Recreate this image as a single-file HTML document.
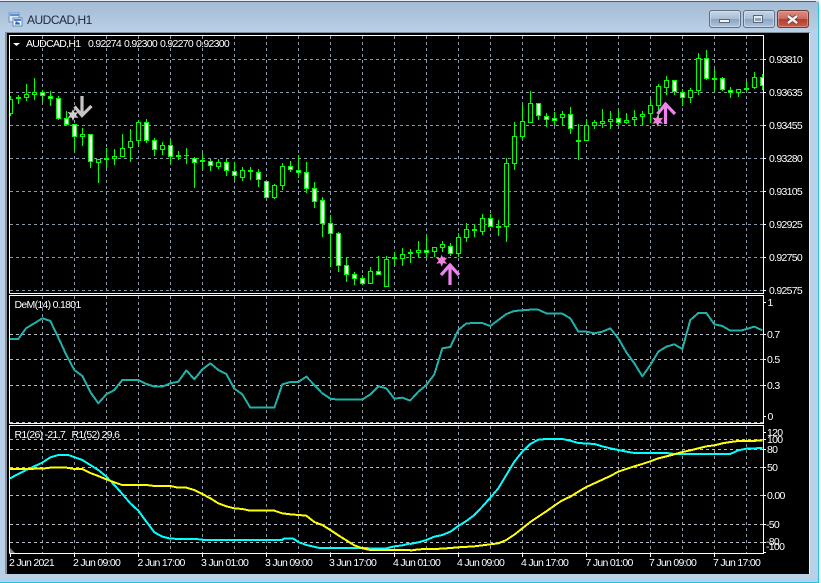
<!DOCTYPE html>
<html><head><meta charset="utf-8"><title>AUDCAD,H1</title>
<style>
html,body{margin:0;padding:0;background:#fff;width:821px;height:583px;overflow:hidden}
svg{position:absolute;left:0;top:0;display:block}
text{font-family:"Liberation Sans",sans-serif;font-size:10.5px;fill:#fff;letter-spacing:-.7px}
.c{shape-rendering:crispEdges}
</style></head><body>
<svg width="821" height="583" viewBox="0 0 821 583" xmlns="http://www.w3.org/2000/svg">
<defs>
<linearGradient id="tb" x1="0" y1="0" x2="0" y2="1"><stop offset="0" stop-color="#a3bbd4"/><stop offset="1" stop-color="#b9d0e6"/></linearGradient>
<linearGradient id="bt" x1="0" y1="0" x2="0" y2="1"><stop offset="0" stop-color="#c6d6e6"/><stop offset=".48" stop-color="#a9bfd6"/><stop offset=".52" stop-color="#8aa5c2"/><stop offset="1" stop-color="#b0c8e0"/></linearGradient>
<linearGradient id="rd" x1="0" y1="0" x2="0" y2="1"><stop offset="0" stop-color="#dc8f86"/><stop offset=".48" stop-color="#ce6b60"/><stop offset=".52" stop-color="#b23c2e"/><stop offset="1" stop-color="#c8604c"/></linearGradient>
<clipPath id="m"><rect x="10" y="36" width="753" height="257"/></clipPath>
<clipPath id="p2"><rect x="10" y="296" width="753" height="127"/></clipPath>
<clipPath id="p3"><rect x="10" y="426" width="753" height="127"/></clipPath>
</defs>
<!-- window chrome -->
<rect class="c" x="0" y="0" width="819" height="583" fill="#b9d1e8"/>
<rect class="c" x="0" y="2" width="819" height="30" fill="url(#tb)"/>
<rect class="c" x="0" y="0" width="821" height="1" fill="#e8eef4"/>
<rect class="c" x="0" y="1" width="816" height="1" fill="#555b62"/>
<rect class="c" x="818" y="3" width="1" height="580" fill="#22c8e0"/>
<rect class="c" x="819" y="0" width="2" height="583" fill="#fff"/>
<rect class="c" x="0" y="582" width="819" height="1" fill="#22c8e0"/>
<rect class="c" x="5" y="32" width="2" height="542" fill="#8b9096"/>
<rect class="c" x="5" y="32" width="805" height="1" fill="#7f8b98"/>
<rect class="c" x="7" y="33" width="802" height="541" fill="#000"/>
<rect class="c" x="809" y="33" width="1" height="541" fill="#e6edf4"/>
<!-- title icon -->
<g class="c">
<rect x="9" y="13" width="10" height="9" fill="#dbe9f6" stroke="#6f93bc"/>
<rect x="10" y="14" width="9" height="2" fill="#5f8fd0"/>
<rect x="13" y="18" width="9" height="8" fill="#f4f9fd" stroke="#5f8ac0"/>
<rect x="14" y="19" width="7" height="2" fill="#4f86d0"/>
<path d="M15 24h1v-2h1v2h1v-1h1v1h1" fill="none" stroke="#2f5f9f" stroke-width=".8"/>
</g>
<text x="27" y="24" style="font-size:12px;fill:#1c2a3a;letter-spacing:-.5px">AUDCAD,H1</text>
<!-- buttons -->
<rect x="709.5" y="10.5" width="31" height="17" rx="2.5" fill="url(#bt)" stroke="#5f6f84"/>
<rect x="710.5" y="11.5" width="29" height="15" rx="2" fill="none" stroke="#dbe6f1" stroke-opacity=".6"/>
<rect class="c" x="719.5" y="19.5" width="10" height="3" fill="#f2f4f6" stroke="#5a6675"/>
<rect x="743.5" y="10.5" width="31" height="17" rx="2.5" fill="url(#bt)" stroke="#5f6f84"/>
<rect x="744.5" y="11.5" width="29" height="15" rx="2" fill="none" stroke="#dbe6f1" stroke-opacity=".6"/>
<rect class="c" x="753.5" y="15.5" width="9" height="7" fill="#e8ecf0" stroke="#5a6675"/>
<rect class="c" x="755" y="18" width="6" height="3" fill="#8ea4bc"/>
<rect x="777.5" y="10.5" width="31" height="17" rx="2.5" fill="url(#rd)" stroke="#6e3a36"/>
<rect x="778.5" y="11.5" width="29" height="15" rx="2" fill="none" stroke="#eeb8b0" stroke-opacity=".5"/>
<path d="M788 16l9 7M797 16l-9 7" stroke="#5a3a3a" stroke-width="4" fill="none"/>
<path d="M788 16l9 7M797 16l-9 7" stroke="#f4f0ee" stroke-width="2.4" fill="none"/>
<!-- vertical grid -->
<g class="c" fill="none" stroke="#8a99a8" stroke-dasharray="3 3">
<path id="vg" d="M42.5 36V293M74.5 36V293M106.5 36V293M138.5 36V293M170.5 36V293M202.5 36V293M234.5 36V293M266.5 36V293M298.5 36V293M330.5 36V293M362.5 36V293M394.5 36V293M426.5 36V293M458.5 36V293M490.5 36V293M522.5 36V293M554.5 36V293M586.5 36V293M618.5 36V293M650.5 36V293M682.5 36V293M714.5 36V293M746.5 36V293"/>
<path d="M42.5 296V423M74.5 296V423M106.5 296V423M138.5 296V423M170.5 296V423M202.5 296V423M234.5 296V423M266.5 296V423M298.5 296V423M330.5 296V423M362.5 296V423M394.5 296V423M426.5 296V423M458.5 296V423M490.5 296V423M522.5 296V423M554.5 296V423M586.5 296V423M618.5 296V423M650.5 296V423M682.5 296V423M714.5 296V423M746.5 296V423"/>
<path d="M42.5 426V553M74.5 426V553M106.5 426V553M138.5 426V553M170.5 426V553M202.5 426V553M234.5 426V553M266.5 426V553M298.5 426V553M330.5 426V553M362.5 426V553M394.5 426V553M426.5 426V553M458.5 426V553M490.5 426V553M522.5 426V553M554.5 426V553M586.5 426V553M618.5 426V553M650.5 426V553M682.5 426V553M714.5 426V553M746.5 426V553"/>
<path d="M10 59.5H763M10 92.5H763M10 125.5H763M10 158.5H763M10 191.5H763M10 224.5H763M10 257.5H763M10 290.5H763"/>
</g>
<g class="c" fill="none" stroke="#b4bbc4" stroke-dasharray="3 3">
<path d="M10 334.5H763M10 359.5H763M10 385.5H763M10 422.5H763M10 439.5H763M10 449.5H763M10 467.5H763M10 495.5H763M10 524.5H763M10 542.5H763"/>
</g>
<!-- candles -->
<g class="c" clip-path="url(#m)">
<path fill="none" stroke="#0f0" d="M10.5 96V116M18.5 95V104M26.5 84V101M34.5 78V100M42.5 90V102M50.5 91V106M58.5 96V120M66.5 111V125M74.5 124V152M82.5 128V146M90.5 134V168M98.5 159V183M106.5 148V168M114.5 149V165M122.5 134V157M130.5 129V162M138.5 120V145M146.5 119V143M154.5 138V156M162.5 142V155M170.5 139V163M178.5 151V160M186.5 148V164M194.5 157V188M202.5 153V169M210.5 159V171M218.5 159V169M226.5 159V176M234.5 162V180M242.5 167V181M250.5 167V180M258.5 169V187M266.5 181V198M274.5 184V199M282.5 163V190M290.5 161V172M298.5 155V178M306.5 162V193M314.5 182V208M322.5 197V237M330.5 215V267M338.5 232V272M346.5 257V282M354.5 272V285M362.5 275V285M370.5 267V284M378.5 256V275M386.5 256V287M394.5 252V266M402.5 248V266M410.5 249V263M418.5 241V258M426.5 236V258M434.5 247V257M442.5 241V252M450.5 243V256M458.5 233V257M466.5 223V242M474.5 224V237M482.5 214V235M490.5 214V227M498.5 220V236M506.5 158V242M514.5 122V170M522.5 105V139M530.5 91V123M538.5 103V120M546.5 113V127M554.5 112V126M562.5 111V126M570.5 107V134M578.5 124V160M586.5 119V141M594.5 120V129M602.5 109V128M610.5 111V129M618.5 109V126M626.5 113V124M634.5 110V126M642.5 111V126M650.5 99V123M658.5 84V120M666.5 76V95M674.5 80V95M682.5 89V106M690.5 88V103M698.5 53V95M706.5 50V80M714.5 69V92M722.5 77V91M730.5 87V98M738.5 89V97M746.5 81V91M754.5 72V89M762.5 74V90"/>
<path fill="#000" stroke="#0f0" d="M8.5 99.5h4v14h-4zM16.5 97.5h4v1h-4zM24.5 94.5h4v3h-4zM32.5 92.5h4v2h-4zM80.5 134.5h4v2h-4zM96.5 159.5h4v3h-4zM112.5 156.5h4v2h-4zM120.5 148.5h4v8h-4zM128.5 141.5h4v6h-4zM136.5 122.5h4v18h-4zM160.5 145.5h4v4h-4zM216.5 162.5h4v4h-4zM240.5 170.5h4v7h-4zM272.5 185.5h4v12h-4zM280.5 166.5h4v19h-4zM368.5 271.5h4v12h-4zM384.5 259.5h4v27h-4zM400.5 254.5h4v4h-4zM416.5 250.5h4v2h-4zM432.5 247.5h4v4h-4zM440.5 244.5h4v3h-4zM456.5 237.5h4v16h-4zM464.5 229.5h4v8h-4zM480.5 218.5h4v13h-4zM504.5 163.5h4v63h-4zM512.5 136.5h4v27h-4zM520.5 121.5h4v15h-4zM528.5 103.5h4v19h-4zM560.5 114.5h4v3h-4zM584.5 125.5h4v15h-4zM592.5 122.5h4v3h-4zM600.5 121.5h4v2h-4zM608.5 119.5h4v2h-4zM624.5 120.5h4v2h-4zM632.5 117.5h4v2h-4zM640.5 114.5h4v2h-4zM648.5 105.5h4v8h-4zM656.5 86.5h4v19h-4zM664.5 80.5h4v7h-4zM688.5 90.5h4v7h-4zM696.5 58.5h4v32h-4zM736.5 89.5h4v3h-4zM752.5 77.5h4v10h-4z"/>
<path fill="#fff" stroke="#0f0" d="M40.5 92.5h4v3h-4zM48.5 96.5h4v2h-4zM56.5 98.5h4v20h-4zM64.5 118.5h4v6h-4zM72.5 124.5h4v12h-4zM88.5 134.5h4v27h-4zM144.5 122.5h4v18h-4zM152.5 140.5h4v9h-4zM168.5 145.5h4v11h-4zM192.5 158.5h4v4h-4zM208.5 161.5h4v4h-4zM224.5 162.5h4v8h-4zM232.5 171.5h4v4h-4zM248.5 170.5h4v1h-4zM256.5 172.5h4v7h-4zM264.5 181.5h4v16h-4zM288.5 166.5h4v3h-4zM296.5 170.5h4v2h-4zM304.5 172.5h4v16h-4zM312.5 188.5h4v13h-4zM320.5 200.5h4v23h-4zM328.5 223.5h4v10h-4zM336.5 233.5h4v32h-4zM344.5 265.5h4v9h-4zM352.5 274.5h4v4h-4zM360.5 278.5h4v5h-4zM376.5 271.5h4v3h-4zM424.5 250.5h4v2h-4zM448.5 246.5h4v7h-4zM472.5 229.5h4v1h-4zM488.5 218.5h4v8h-4zM536.5 103.5h4v12h-4zM544.5 116.5h4v3h-4zM552.5 118.5h4v2h-4zM568.5 114.5h4v14h-4zM616.5 118.5h4v4h-4zM672.5 80.5h4v11h-4zM680.5 92.5h4v5h-4zM704.5 58.5h4v20h-4zM720.5 78.5h4v11h-4zM728.5 90.5h4v2h-4zM760.5 77.5h4v8h-4z"/>
<path fill="#0f0" d="M104 158h5v2h-5zM176 155h5v2h-5zM184 155h5v1h-5zM200 160h5v2h-5zM392 257h5v2h-5zM408 252h5v2h-5zM496 226h5v2h-5zM576 140h5v2h-5zM712 78h5v2h-5zM744 88h5v2h-5z"/>
</g>
<!-- arrows & stars -->
<g fill="none" stroke-linejoin="miter">
<path d="M82 96V116M74.500 106.500L82 115.500L91.500 106" stroke="#c9c4c4" stroke-width="3.200"/>
<path d="M450 264V285M441 275L450 265L459 275" stroke="#ee82ee" stroke-width="3.200"/>
<path d="M665.500 103V124M657.500 114L665.500 104L675 114" stroke="#ee82ee" stroke-width="3.200"/>
</g>
<polygon fill="#d0ccd0" stroke="#d0ccd0" stroke-width=".8" points="73,110 74.300,113 77.500,112.500 75.500,115 77.500,117.500 74.300,117 73,120 71.700,117 68.500,117.500 70.500,115 68.500,112.500 71.700,113"/>
<polygon fill="#ee82d8" stroke="#ee82d8" stroke-width=".8" points="441.700,255.700 443,258.700 446.200,258.200 444.200,260.700 446.200,263.200 443,262.700 441.700,265.700 440.400,262.700 437.200,263.200 439.200,260.700 437.200,258.200 440.400,258.700"/>
<polygon fill="#ee82d8" stroke="#ee82d8" stroke-width=".8" points="657.700,115.700 659,118.700 662.200,118.200 660.200,120.700 662.200,123.200 659,122.700 657.700,125.700 656.400,122.700 653.200,123.200 655.200,120.700 653.200,118.200 656.400,118.700"/>
<!-- DeM line -->
<g clip-path="url(#p2)" class="c">
<g fill="none" stroke="#20b2aa" stroke-width="2" stroke-linejoin="round">
<polyline transform="translate(0 290) scale(.33333)" stroke-width="6" points="30,147 55,147 78,115 103,100 127,85 151,93 175,143 199,195 223,240 247,258 271,306 295,340 319,313 343,300 367,270 415,270 439,282 463,290 487,290 511,280 535,275 559,241 583,268 607,238 631,220 655,240 679,252 703,296 727,313 751,353 823,353 847,283 871,276 895,276 919,260 943,285 967,310 991,326 1015,329 1087,329 1111,313 1135,289 1159,295 1183,326 1207,323 1231,332"/>
<polyline transform="translate(410 290) scale(.33333)" stroke-width="6" points="0,332 25,305 49,285 73,253 97,175 121,171 145,120 169,100 217,99 241,108 265,90 289,72 313,63 361,59 385,59 409,70 457,71 481,85 505,125 529,125 553,130 577,125 601,115 625,145 649,187 673,220 697,259 721,225 745,185 769,170 793,163 817,177 841,90 865,69 889,69 913,103 937,108 961,122 993,122 1033,110 1057,121"/>
</g></g>
<!-- R1 lines -->
<g clip-path="url(#p3)" class="c">
<g fill="none" stroke-linejoin="round" stroke-width="6">
<polyline transform="translate(0 420) scale(.33333)" stroke="#0ff" points="30,175 78,150 127,128 151,112 175,105 205,105 247,120 271,135 295,150 319,170 343,195 367,222 391,250 415,272 439,305 463,337 487,350 511,356 607,358 608,360 847,360 851,356 880,356 895,366 919,375 959,384 1060,384 1087,384 1111,385 1159,385 1183,379 1207,376 1231,370"/>
<polyline transform="translate(410 420) scale(.33333)" stroke="#0ff" points="0,372 25,367 49,360 73,350 97,345 121,335 145,318 169,303 193,285 217,260 241,233 265,205 289,165 313,125 337,95 361,72 385,59 409,57 457,57 481,62 505,69 553,72 577,79 601,85 649,95 673,99 769,99 793,102 961,102 985,91 1009,86 1057,84"/>
<polyline transform="translate(0 420) scale(.33333)" stroke="#ff0" points="30,147 127,146 151,143 199,143 223,147 247,147 271,159 295,168 319,178 343,187 367,195 439,195 463,198 511,198 535,203 559,203 583,210 607,222 631,235 655,250 679,259 703,265 727,267 751,272 823,272 847,280 871,283 919,287 943,306 967,315 991,330 1015,346 1039,361 1063,376 1087,385 1111,390 1231,390"/>
<polyline transform="translate(410 420) scale(.33333)" stroke="#ff0" points="0,392 25,388 97,386 121,384 145,382 193,379 217,376 265,370 289,360 313,344 337,325 361,306 385,290 409,274 433,257 457,241 481,230 505,215 529,201 553,190 577,179 601,168 625,155 649,147 673,139 697,132 721,124 745,115 769,109 793,103 817,96 841,91 865,85 889,79 913,76 937,70 961,66 985,63 1057,62"/>
</g></g>
<!-- frames -->
<g class="c" fill="none" stroke="#fff">
<path d="M9.500 293.500V35.500H763.500V293.500H9.500"/>
<path d="M9.500 423.500V295.500H763.500V423.500H9.500"/>
<path d="M9.500 553.500V425.500H763.500V553.500H9.500"/>
<path d="M763 59.500h3M763 92.500h3M763 125.500h3M763 158.500h3M763 191.500h3M763 224.500h3M763 257.500h3M763 290.500h3M763 302.500h3M763 334.500h3M763 359.500h3M763 385.500h3M763 416.500h3M763 432.500h3M763 439.500h3M763 449.500h3M763 467.500h3M763 495.500h3M763 524.500h3M763 542.500h3M763 552.500h3"/>
<path d="M10.500 553v4M74.500 553v4M138.500 553v4M202.500 553v4M266.500 553v4M330.500 553v4M394.500 553v4M458.500 553v4M522.500 553v4M586.500 553v4M650.500 553v4M714.500 553v4"/>
</g>
<polygon points="10,548 10,553 15,553" fill="#808080"/>
<polygon points="13,43 20,43 16.500,46" fill="#fff"/>
<!-- chart texts -->
<text x="26" y="47">AUDCAD,H1</text>
<text x="88" y="47">0.92274</text><text x="124" y="47">0.92300</text><text x="160" y="47">0.92270</text><text x="196" y="47">0.92300</text>
<text x="14.500" y="308">DeM(14) 0.1801</text>
<text x="14.500" y="438">R1(26) -21.7</text><text x="71.500" y="438">R1(52) 29.6</text>
<text x="769" y="63">0.93810</text><text x="769" y="96">0.93635</text><text x="769" y="129">0.93455</text><text x="769" y="162">0.93280</text><text x="769" y="195">0.93105</text><text x="769" y="228">0.92925</text><text x="769" y="261">0.92750</text><text x="769" y="294">0.92575</text>
<text x="767.500" y="306">1</text><text x="767" y="338">0.7</text><text x="767" y="363">0.5</text><text x="767" y="389">0.3</text><text x="767.500" y="420">0</text>
<text x="767" y="436">120</text><text x="767" y="443">100</text><text x="767" y="453">80</text><text x="767" y="471">50</text><text x="767" y="499">0.00</text><text x="766" y="528">-50</text><text x="766" y="545">-80</text><text x="766" y="550">-100</text>
<text x="9" y="566">2 Jun 2021</text><text x="73" y="566">2 Jun 09:00</text><text x="137.500" y="566">2 Jun 17:00</text><text x="201" y="566">3 Jun 01:00</text><text x="265" y="566">3 Jun 09:00</text><text x="329" y="566">3 Jun 17:00</text><text x="393" y="566">4 Jun 01:00</text><text x="457" y="566">4 Jun 09:00</text><text x="521" y="566">4 Jun 17:00</text><text x="585.500" y="566">7 Jun 01:00</text><text x="649" y="566">7 Jun 09:00</text><text x="713" y="566">7 Jun 17:00</text>
</svg>
</body></html>
